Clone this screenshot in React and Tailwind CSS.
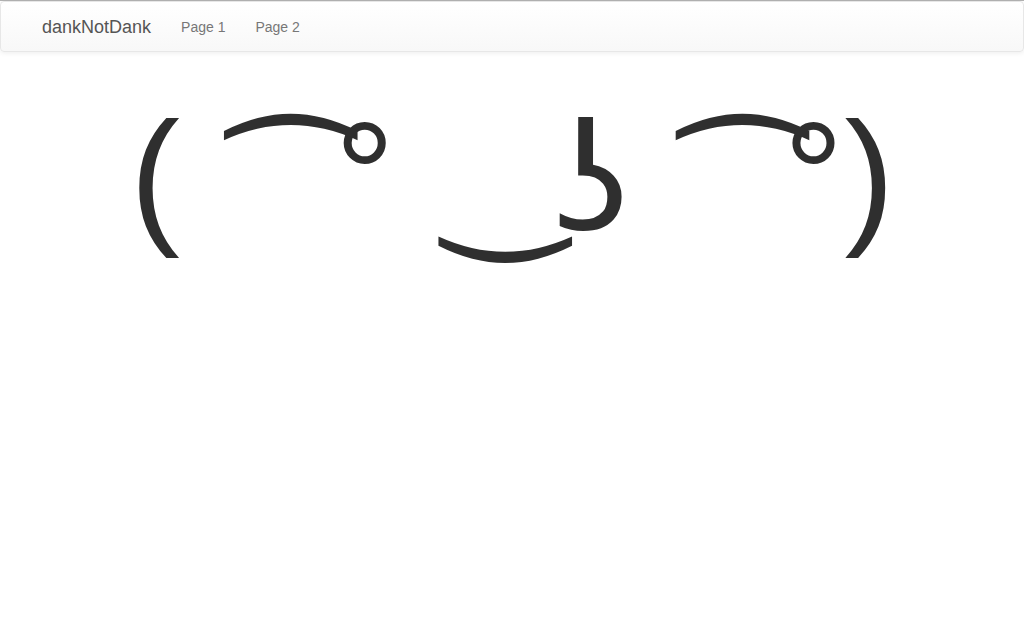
import React from "react";

const links = ["Page 1", "Page 2"];

export default function App() {
  return (
    <div className="min-h-screen bg-white border-t border-[#b3b3b3] font-['Liberation_Sans',Arial,sans-serif] text-[#333]">
      {/* Navbar */}
      <nav className="h-[51px] rounded-[4px] border border-[#e7e7e7] bg-gradient-to-b from-white to-[#f8f8f8] shadow-[inset_0_1px_0_rgba(255,255,255,.15),0_1px_5px_rgba(0,0,0,.075)]">
        <div className="w-[970px] mx-auto px-[15px] flex items-center h-full">
          <a href="#" className="-ml-[15px] px-[15px] text-[18px] leading-[20px] text-[#555]">
            dankNotDank
          </a>
          <ul className="flex">
            {links.map((l) => (
              <li key={l}>
                <a href="#" className="block px-[15px] text-[14px] leading-[20px] text-[#777]">
                  {l}
                </a>
              </li>
            ))}
          </ul>
        </div>
      </nav>

      {/* Main: the lenny face, marks spaced out like the original render */}
      <main className="mt-[20px] px-[42px]">
        <h1 className="pt-[21px] text-[150px] leading-[1.1] font-normal text-[#2f2f2f] whitespace-pre">
          <span className="ml-[88px]">(</span>
          <span className="ml-[63px] relative top-[26px] font-['DejaVu_Sans']">{" \u0361"}</span>
          <span className="ml-[44px]">°</span>
          <span className="ml-[63px] font-['DejaVu_Sans']">{" \u035C"}</span>
          <span className="ml-[48px] relative top-[4px] font-['DejaVu_Sans']">ʖ</span>
          <span className="ml-[65px] relative top-[26px] font-['DejaVu_Sans']">{" \u0361"}</span>
          <span className="ml-[41px]">°</span>
          <span className="ml-[1px]">)</span>
        </h1>
      </main>
    </div>
  );
}
